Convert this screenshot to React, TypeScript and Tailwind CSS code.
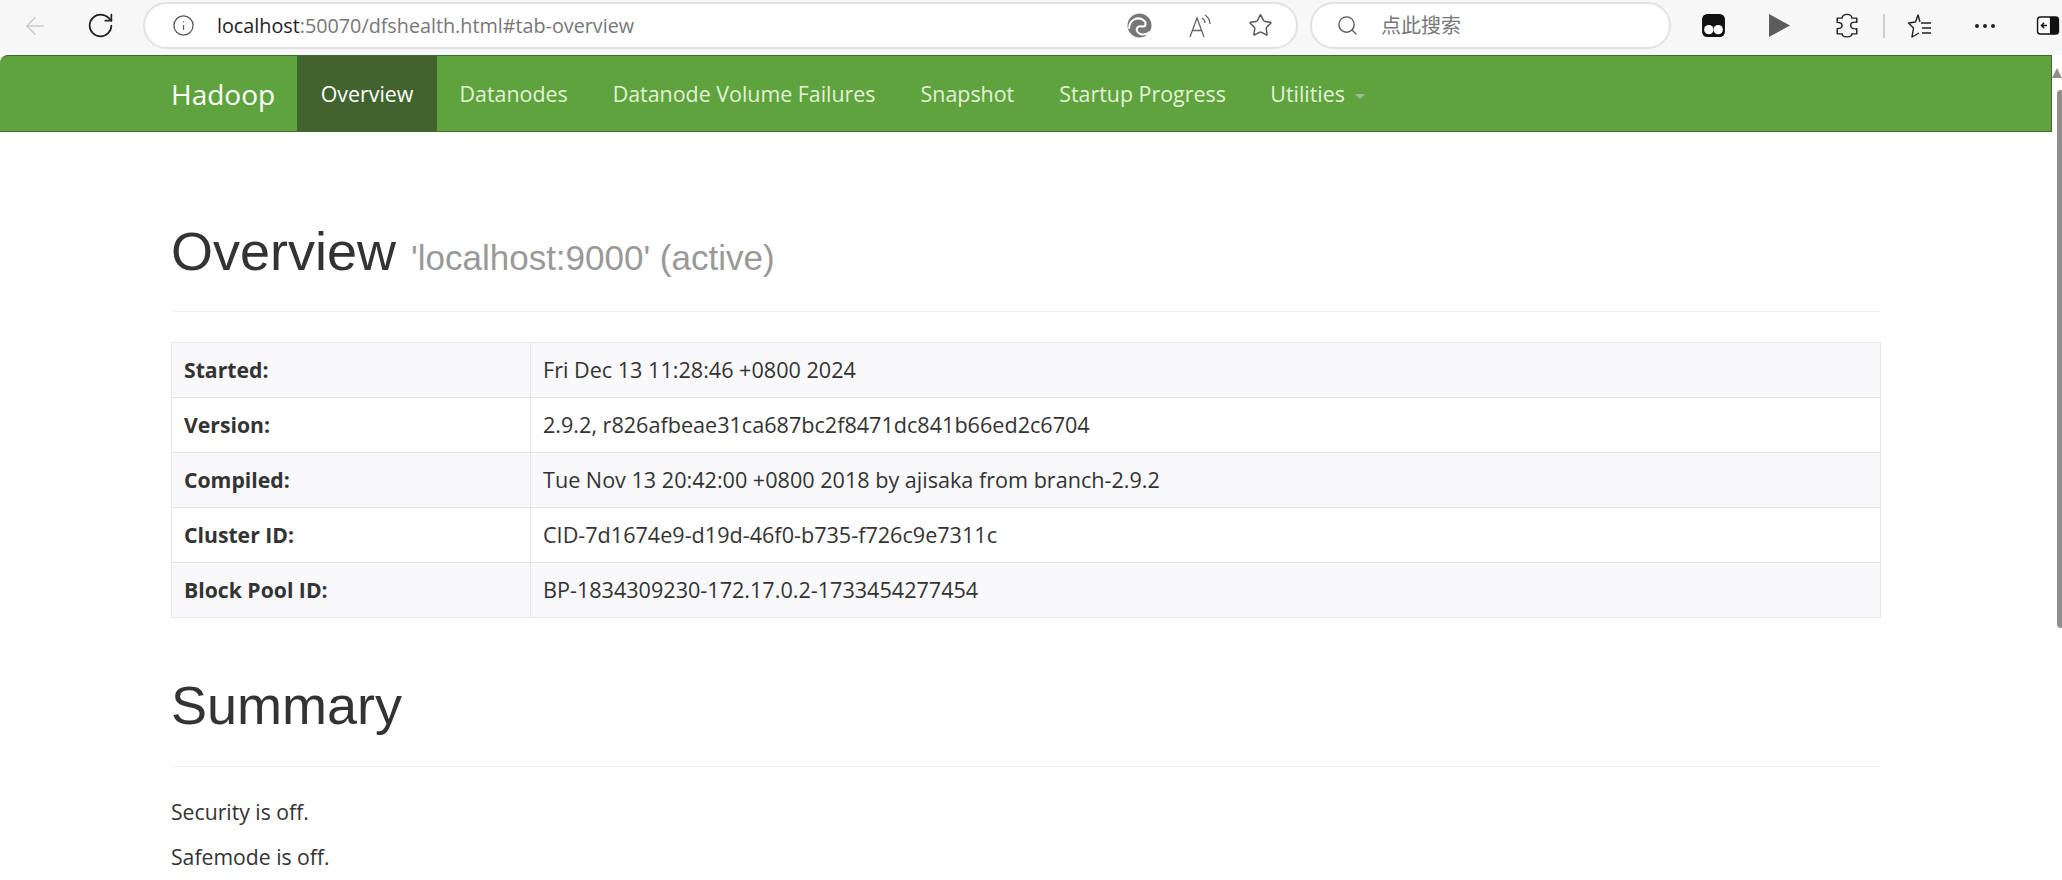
import { ArrowLeft, Info, RotateCw, Search, Star } from 'lucide-react';

const navItems = ['Datanodes', 'Datanode Volume Failures', 'Snapshot', 'Startup Progress'];

const rows = [
  ['Started:', 'Fri Dec 13 11:28:46 +0800 2024'],
  ['Version:', '2.9.2, r826afbeae31ca687bc2f8471dc841b66ed2c6704'],
  ['Compiled:', 'Tue Nov 13 20:42:00 +0800 2018 by ajisaka from branch-2.9.2'],
  ['Cluster ID:', 'CID-7d1674e9-d19d-46f0-b735-f726c9e7311c'],
  ['Block Pool ID:', 'BP-1834309230-172.17.0.2-1733454277454'],
];

function BrowserBar() {
  return (
    <div className="flex h-[55px] items-center bg-[#f7f7f8] pb-[4px]">
      {/* Back and reload */}
      <div className="flex w-[143px] shrink-0 items-center pl-[21px]">
        <ArrowLeft className="h-[28px] w-[28px] text-[#c9c9c9]" strokeWidth={1.2} />
        <RotateCw className="ml-[37px] h-[29px] w-[29px] text-[#222]" strokeWidth={1.4} />
      </div>

      {/* Address bar */}
      <div className="flex h-[47px] w-[1155px] shrink-0 items-center rounded-full border-2 border-[#e2e2e4] bg-white pl-[27px] pr-[23px]">
        <Info className="h-[23px] w-[23px] text-[#555]" strokeWidth={1.3} />
        <span className="ml-[22px] text-[19.750px] text-[#777]">
          <span className="text-[#222]">localhost</span>:50070/dfshealth.html#tab-overview
        </span>
        <div className="ml-auto flex items-center gap-[35px]">
          <svg viewBox="0 0 24 24" className="h-[25px] w-[25px]">
            <circle cx="12" cy="12" r="11.500" fill="#777" />
            <path d="M2 15C2 6 11 3 16 7c3 2 2 6-1 6-4-1-7 1-5 5 2 3 7 4 12 0" fill="none" stroke="#fff" strokeWidth="2" />
          </svg>
          <svg viewBox="0 0 26 26" className="h-[26px] w-[26px]" fill="none" stroke="#666" strokeWidth="1.300">
            <path d="M3 24 10 5l7 19M5.500 17.500h9" />
            <path d="M15 5c2 1 3 3 3 5M18 2c3 2 5 5 5 9" />
          </svg>
          <Star className="h-[25px] w-[25px] text-[#555]" strokeWidth={1.4} />
        </div>
      </div>

      {/* Search box */}
      <div className="ml-[12px] flex h-[47px] w-[361px] shrink-0 items-center rounded-full border-2 border-[#e2e2e4] bg-white pl-[24px]">
        <Search className="h-[23px] w-[23px] text-[#555]" strokeWidth={1.4} />
        <span className="ml-[22px] text-[20px] text-[#777]">点此搜索</span>
      </div>

      {/* Toolbar icons */}
      <svg viewBox="0 0 24 24" className="ml-[30px] h-[25px] w-[25px] shrink-0">
        <rect x="1" y="1" width="22" height="22" rx="5" fill="#111" />
        <circle cx="7.500" cy="16" r="4.500" fill="#fff" />
        <circle cx="16.500" cy="16" r="4.500" fill="#fff" />
      </svg>
      <svg viewBox="1 1 22 22" preserveAspectRatio="none" className="ml-[43px] h-[23px] w-[21px] shrink-0">
        <path d="M1 1 23 12 1 23Z" fill="#5c5c5c" />
      </svg>
      <svg viewBox="3 0 18 24" preserveAspectRatio="none" className="ml-[46px] h-[25px] w-[22px] shrink-0" fill="none" stroke="#222" strokeWidth="1.200" strokeLinejoin="round">
        <path d="M8 5C8 0 16 0 16 5h4v4c-4-1-5 1-5 3s2 4 5 3v5h-4c0 4-8 4-8 0H4v-5c3 0 4-1 4-3s-1-3-4-3V5Z" />
      </svg>
      <div className="ml-[25px] h-[24px] w-[2px] shrink-0 bg-[#d0d0d0]" />
      <svg viewBox="0 0 26 26" className="ml-[22px] h-[26px] w-[26px] shrink-0" fill="none" stroke="#222" strokeWidth="1.400">
        <path d="M13 9 11 2 8.500 9 1.500 10l5 5-1.500 9 7-4" strokeLinejoin="round" />
        <path d="M14 10h10M15 15h9M15 20h9" />
      </svg>
      <div className="ml-[42px] flex shrink-0 gap-[4px]">
        <span className="h-[4px] w-[4px] rounded-full bg-[#222]" />
        <span className="h-[4px] w-[4px] rounded-full bg-[#222]" />
        <span className="h-[4px] w-[4px] rounded-full bg-[#222]" />
      </div>
      <svg viewBox="0 0 24 20" className="ml-[41px] h-[19px] w-[24px] shrink-0">
        <rect x="1" y="1" width="22" height="18" rx="3" fill="#fff" stroke="#111" strokeWidth="1.500" />
        <path d="M14 1h6a3 3 0 0 1 3 3v12a3 3 0 0 1-3 3h-6Z" fill="#111" />
        <path d="M11 10H5m3-3-3 3 3 3" fill="none" stroke="#111" strokeWidth="1.500" />
      </svg>
    </div>
  );
}

function NavBar() {
  return (
    <nav className="flex h-[77px] items-stretch rounded-tl-[8px] border-y border-r border-[#3f6a2c] bg-[#5fa33e] pl-[171px] text-[21.400px] text-[#e3f1d6]">
      <a className="flex w-[126px] items-center text-[28px] text-white">Hadoop</a>
      <a className="flex w-[140px] items-center justify-center bg-[#41642f] pt-[2px] text-white">Overview</a>
      {navItems.map((item) => (
        <a key={item} className="flex items-center px-[22.500px] pt-[2px]">
          {item}
        </a>
      ))}
      <a className="flex items-center pl-[22px] pt-[2px]">
        Utilities
        <span className="ml-[10px] mt-[3px] border-x-[5px] border-t-[5px] border-x-transparent border-t-[#9fb896]" />
      </a>
    </nav>
  );
}

function PageHeader({ children }: { children: React.ReactNode }) {
  return (
    <div className="border-b border-[#f1f1f1] font-['Liberation_Sans',sans-serif] text-[#333]">
      {children}
    </div>
  );
}

export default function App() {
  return (
    <div className="flex h-[880px] w-[2062px] flex-col overflow-hidden bg-white font-['Open_Sans','Noto_Sans_CJK_SC',sans-serif] text-[21.600px] text-[#333]">
      <BrowserBar />
      <div className="flex min-h-0 flex-1">
        <div className="w-[2052px] shrink-0">
          <NavBar />
          <main className="mx-[171px] w-[1710px]">
            <div className="pb-[30px] pt-[85px]">
              <PageHeader>
                <h1 className="h-[94px] text-[54px] leading-[68px]">
                  Overview <small className="text-[35px] text-[#999]">'localhost:9000' (active)</small>
                </h1>
              </PageHeader>
            </div>

            <table className="w-full border-collapse">
              <tbody>
                {rows.map(([label, value], i) => (
                  <tr key={label} className={i % 2 === 0 ? 'h-[55px] bg-[#f9f8fa]' : 'h-[55px] bg-white'}>
                    <th className="w-[359px] border border-[#e6e6e8] pl-[12px] text-left text-[21.200px] font-bold">{label}</th>
                    <td className="border border-[#e6e6e8] pl-[12px]">{value}</td>
                  </tr>
                ))}
              </tbody>
            </table>

            <div className="mt-[39px]">
              <PageHeader>
                <h1 className="h-[109px] text-[54px] leading-[96px]">Summary</h1>
              </PageHeader>
            </div>
            <p className="mt-[31px] text-[21.200px] leading-[28px]">Security is off.</p>
            <p className="mt-[17px] text-[21.200px] leading-[28px]">Safemode is off.</p>
          </main>
        </div>

        {/* Scrollbar */}
        <div className="flex w-[10px] flex-col items-end">
          <div className="mt-[13px] h-0 w-0 border-x-[5px] border-b-[10px] border-x-transparent border-b-[#8e8e8e]" />
          <div className="mt-[12px] h-[538px] w-[5px] rounded-l-[4px] bg-[#8e8e8e]" />
        </div>
      </div>
    </div>
  );
}
